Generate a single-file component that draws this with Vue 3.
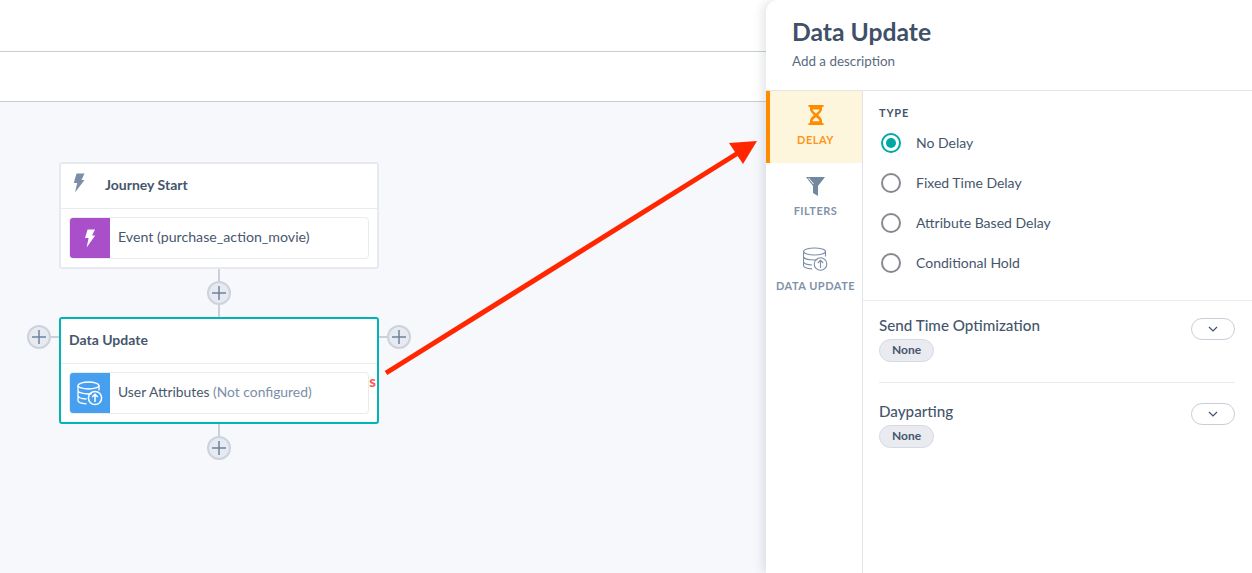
<script setup>
const radios = [
  { label: 'No Delay', on: true },
  { label: 'Fixed Time Delay', on: false },
  { label: 'Attribute Based Delay', on: false },
  { label: 'Conditional Hold', on: false },
]
const sections = ['Send Time Optimization', 'Dayparting']
const plusButtons = [
  { x: 207, y: 179 },
  { x: 27, y: 223 },
  { x: 387, y: 223 },
  { x: 207, y: 334 },
]
</script>

<template>
  <div class="page">
    <div class="topbar"></div>
    <div class="toolbar"></div>
    <div class="canvas">
      <span class="wire" style="left:218px;top:167px;width:2px;height:48px"></span>
      <span class="wire" style="left:218px;top:322px;width:2px;height:14px"></span>
      <span class="wire" style="left:50px;top:234px;width:10px;height:2px"></span>
      <span class="wire" style="left:378px;top:234px;width:10px;height:2px"></span>

      <div class="node node-a">
        <div class="node-head">
          <svg class="head-bolt" width="12" height="20" viewBox="0 0 12 20"><path d="M3.500 0.500h8L8.500 7h3L2 19.500 4.200 10H0.800z" fill="#7b8ea5"/></svg>
          <span class="node-title indented">Journey Start</span>
        </div>
        <div class="node-body">
          <div class="row">
            <div class="tile purple">
              <svg width="12" height="19" viewBox="0 0 12 19"><path d="M3.600 0.500h7.400L8 6.500h3.200L2.600 18.500 4.600 9H1z" fill="#fff"/></svg>
            </div>
            <span class="row-text">Event (purchase_action_movie)</span>
          </div>
        </div>
      </div>

      <div class="node node-b">
        <div class="node-head">
          <span class="node-title">Data Update</span>
        </div>
        <div class="node-body">
          <div class="row">
            <div class="tile blue">
              <svg width="26" height="26" viewBox="0 0 26 26" fill="none" stroke="#fff" stroke-width="1.300">
                <ellipse cx="11.500" cy="5.500" rx="10.500" ry="3.500"/>
                <path d="M1 5.500v15c0 1.900 4 3 8.500 3.400M22 5.500v5M1 10.500c0 1.900 4.500 3.500 10.500 3.500 1.500 0 2.500-.1 3.500-.3M1 15.500c0 1.800 3.500 3.200 8.500 3.500"/>
                <circle cx="18" cy="18" r="6.600" stroke-width="1.500"/>
                <path d="M18 22v-7.500M15.200 17l2.800-2.800 2.800 2.800" stroke-width="1.500"/>
              </svg>
            </div>
            <span class="row-text narrow">User Attributes <span class="muted">(Not configured)</span></span>
          </div>
          <span class="clipped-s">s</span>
        </div>
      </div>

      <button v-for="(p, i) in plusButtons" :key="i" class="plus" :style="{ left: p.x + 'px', top: p.y + 'px' }">
        <svg width="14" height="14" viewBox="0 0 14 14"><path d="M7 0v14M0 7h14" stroke="#6d849e" stroke-width="1.500"/></svg>
      </button>
    </div>

    <aside class="panel">
      <header class="panel-head">
        <h1>Data Update</h1>
        <p>Add a description</p>
      </header>
      <div class="panel-main">
        <nav class="tabs">
          <div class="tab active">
            <svg width="16" height="20" viewBox="0 0 16 20"><path d="M0.500 0h15v2H14v2.500c0 2.200-2.500 4-3.800 5.500 1.300 1.500 3.800 3.300 3.800 5.500V18h1.500v2H0.500v-2H2v-2.500C2 13.300 4.500 11.500 5.800 10 4.500 8.500 2 6.700 2 4.500V2H0.500zM4.500 4.500h7c0 1-2 2.800-3.500 4-1.500-1.200-3.500-3-3.500-4zM8 12.200c-1.400 1.100-3.300 2.400-3.500 3.800v.2h7V16c-.2-1.400-2.100-2.700-3.500-3.800z" fill="#ff8c00" fill-rule="evenodd"/></svg>
            <span>DELAY</span>
          </div>
          <div class="tab">
            <svg width="19" height="19" viewBox="0 0 19 19"><path d="M0 0h19l-7 9v10l-5-3V9z" fill="#72889f"/><path d="M2.500 1l5 6" stroke="#fff" stroke-width="1"/></svg>
            <span>FILTERS</span>
          </div>
          <div class="tab">
            <svg width="25" height="24" viewBox="0 0 25 24" fill="none" stroke="#7b8ea5" stroke-width="1.100">
              <ellipse cx="11.500" cy="4.500" rx="11" ry="3.500"/>
              <path d="M0.500 4.500v14c0 1.900 4 3 8.500 3.400M22.500 4.500v5M0.500 9.500c0 1.900 4.500 3.500 11 3.500 1 0 2-.1 3-.2M0.500 14.500c0 1.800 3.500 3.200 8.500 3.500"/>
              <circle cx="17.500" cy="17" r="6.300"/>
              <path d="M17.500 21v-7.500M14.800 16l2.700-2.700 2.700 2.700"/>
            </svg>
            <span>DATA UPDATE</span>
          </div>
        </nav>
        <div class="content">
          <section class="type">
            <h2>TYPE</h2>
            <label v-for="r in radios" :key="r.label" class="radio">
              <span class="dot" :class="{ on: r.on }"></span>
              <span>{{ r.label }}</span>
            </label>
          </section>
          <section class="options">
            <div v-for="s in sections" :key="s" class="option">
              <div>
                <h3>{{ s }}</h3>
                <span class="pill">None</span>
              </div>
              <button class="chev">
                <svg width="10" height="6" viewBox="0 0 10 6" fill="none"><path d="M1 1l4 4 4-4" stroke="#3f5068" stroke-width="1.200"/></svg>
              </button>
            </div>
          </section>
        </div>
      </div>
    </aside>

    <svg class="arrow" width="1252" height="573" viewBox="0 0 1252 573">
      <path d="M386 373L738 153" stroke="#ff2600" stroke-width="5" fill="none"/>
      <path d="M757 141L729 143 743 164z" fill="#ff2600"/>
    </svg>
  </div>
</template>

<style>
html, body { margin: 0; background: #fff; }
</style>

<style scoped>
.page {
  position: relative;
  width: 1252px;
  height: 573px;
  overflow: hidden;
  display: flex;
  flex-direction: column;
  font-family: Lato, "Noto Sans", sans-serif;
  color: #3f5068;
}
.topbar {
  height: 51px;
  flex: none;
  border-bottom: 1px solid #c9ccd1;
  background: #fff;
}
.toolbar {
  height: 49px;
  flex: none;
  border-bottom: 1px solid #c9ccd1;
  background: #fff;
}
.canvas {
  position: relative;
  flex: 1;
  background: #f6f8fc;
}
.wire {
  position: absolute;
  background: #c9d1dc;
}
.node {
  position: absolute;
  left: 59px;
  width: 320px;
  box-sizing: border-box;
  background: #fff;
  border-radius: 3px;
  border: 2px solid #e7e9ef;
}
.node-a { top: 60px; height: 107px; }
.node-b { top: 215px; height: 107px; border-color: #00b5b8; }
.node-head {
  display: flex;
  align-items: center;
  height: 44px;
  padding-left: 8px;
  border-bottom: 1px solid #e9ebf0;
}
.head-bolt { margin-left: 4px; margin-top: -6px; }
.node-title {
  font-size: 14px;
  font-weight: 700;
  color: #45566c;
  padding-bottom: 4px;
}
.indented { margin-left: 20px; }
.node-body {
  position: relative;
  padding: 8px 8px 0;
}
.row {
  display: flex;
  align-items: center;
  height: 40px;
  border: 1px solid #e9ebf0;
  border-radius: 4px;
  overflow: hidden;
}
.tile {
  width: 40px;
  height: 40px;
  flex: none;
  display: flex;
  align-items: center;
  justify-content: center;
}
.purple { background: #a94fc9; }
.blue { background: #479ff0; }
.row-text {
  margin-left: 8px;
  font-size: 14.200px;
  color: #47586e;
  padding-bottom: 4px;
}
.row-text.narrow { font-size: 13.850px; }
.muted { color: #7b8ea5; }
.clipped-s {
  position: absolute;
  right: 1px;
  top: 10px;
  font-size: 15px;
  font-weight: 900;
  line-height: 14px;
  color: #ff5a4f;
}
.plus {
  position: absolute;
  width: 24px;
  height: 24px;
  padding: 0;
  box-sizing: border-box;
  border: 2px solid #ccd3dd;
  border-radius: 50%;
  background: #e7eaf1;
  display: flex;
  align-items: center;
  justify-content: center;
}
.panel {
  position: absolute;
  left: 766px;
  top: 0;
  right: 0;
  bottom: 0;
  background: #fff;
  border-top-left-radius: 12px;
  box-shadow: -4px 0 10px rgba(60, 70, 90, 0.13);
  display: flex;
  flex-direction: column;
}
.panel-head {
  height: 91px;
  flex: none;
  box-sizing: border-box;
  padding: 17px 26px 0;
  border-bottom: 1px solid #e2e4ec;
}
.panel-head h1 {
  margin: 0;
  font-size: 24.700px;
  line-height: 29px;
  font-weight: 700;
  color: #3f5068;
}
.panel-head p {
  margin: 7px 0 0;
  font-size: 13.400px;
  line-height: 16px;
  color: #5a6b80;
}
.panel-main {
  flex: 1;
  display: flex;
}
.tabs {
  width: 97px;
  flex: none;
  box-sizing: border-box;
  border-right: 1px solid #e2e4ec;
  text-align: center;
  display: flex;
  flex-direction: column;
}
.tab {
  display: flex;
  flex-direction: column;
  align-items: center;
  height: 72px;
  box-sizing: border-box;
  padding: 14px 0 0 3px;
  gap: 8px;
  font-size: 11px;
  line-height: 14px;
  font-weight: 700;
  letter-spacing: 0.5px;
  color: #7f92aa;
}
.tab:nth-child(3) { padding-top: 12px; }
.tab.active {
  background: #fef6dc;
  border-left: 4px solid #ff8c00;
  padding-left: 0;
  padding-right: 1px;
  color: #ff9518;
}
.content {
  flex: 1;
  display: flex;
  flex-direction: column;
}
.type {
  height: 210px;
  box-sizing: border-box;
  padding: 15px 16px 0;
  border-bottom: 1px solid #e9ebf0;
}
.type h2 {
  margin: 0 0 3px;
  font-size: 11px;
  line-height: 13px;
  font-weight: 700;
  letter-spacing: 0.8px;
  color: #45566c;
}
.radio {
  display: flex;
  align-items: center;
  gap: 15px;
  height: 40px;
  font-size: 14px;
  color: #45566c;
}
.dot {
  position: relative;
  width: 20px;
  height: 20px;
  margin: 2px 0 0 2px;
  box-sizing: border-box;
  border: 2px solid #868a90;
  border-radius: 50%;
}
.dot.on { border-color: #00a8a5; }
.dot.on::after {
  content: "";
  position: absolute;
  inset: 3px;
  border-radius: 50%;
  background: #00a8a5;
}
.options { padding: 0 17px 0 16px; }
.option {
  display: flex;
  justify-content: space-between;
  align-items: flex-start;
  height: 81px;
  box-sizing: border-box;
  padding-top: 17px;
}
.option + .option {
  border-top: 1px solid #e9ebf0;
  padding-top: 21px;
}
.option + .option .chev { margin-top: -1px; }
.option h3 {
  margin: -2px 0 5px;
  font-size: 15.200px;
  line-height: 18px;
  font-weight: 500;
  color: #45566c;
}
.pill {
  display: block;
  width: 55px;
  height: 23px;
  box-sizing: border-box;
  border: 1px solid #d5d9e2;
  border-radius: 12px;
  background: #e9ebf1;
  font-size: 12px;
  line-height: 19px;
  font-weight: 700;
  text-align: center;
  color: #45566c;
}
.chev {
  width: 44px;
  height: 22px;
  padding: 0;
  background: #fff;
  border: 1px solid #c9ced9;
  border-radius: 11px;
  display: flex;
  align-items: center;
  justify-content: center;
}
.arrow {
  position: absolute;
  left: 0;
  top: 0;
  pointer-events: none;
}
</style>
